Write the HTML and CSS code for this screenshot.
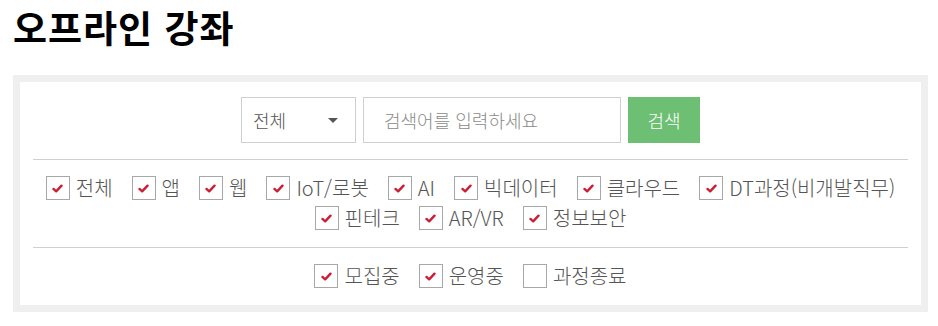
FILE: index.html
```html
<!DOCTYPE html>
<html lang="ko">
<head>
<meta charset="utf-8">
<link rel="stylesheet" href="styles.css">
</head>
<body>
<h1 class="title">오프라인 강좌</h1>
<div class="panel">
  <div class="panel-inner">
    <div class="search-row">
      <div class="select"><span>전체</span><span class="caret"></span></div>
      <div class="input">검색어를 입력하세요</div>
      <button class="btn">검색</button>
    </div>
    <div class="filters">
      <label class="chk"><span class="box on"><svg viewBox="0 0 12 10"><path d="M1.5 5.5 L4.5 8.2 L10.5 1.8"/></svg></span>전체</label>
      <label class="chk"><span class="box on"><svg viewBox="0 0 12 10"><path d="M1.5 5.5 L4.5 8.2 L10.5 1.8"/></svg></span>앱</label>
      <label class="chk"><span class="box on"><svg viewBox="0 0 12 10"><path d="M1.5 5.5 L4.5 8.2 L10.5 1.8"/></svg></span>웹</label>
      <label class="chk"><span class="box on"><svg viewBox="0 0 12 10"><path d="M1.5 5.5 L4.5 8.2 L10.5 1.8"/></svg></span>IoT/로봇</label>
      <label class="chk"><span class="box on"><svg viewBox="0 0 12 10"><path d="M1.5 5.5 L4.5 8.2 L10.5 1.8"/></svg></span>AI</label>
      <label class="chk"><span class="box on"><svg viewBox="0 0 12 10"><path d="M1.5 5.5 L4.5 8.2 L10.5 1.8"/></svg></span>빅데이터</label>
      <label class="chk"><span class="box on"><svg viewBox="0 0 12 10"><path d="M1.5 5.5 L4.5 8.2 L10.5 1.8"/></svg></span>클라우드</label>
      <label class="chk"><span class="box on"><svg viewBox="0 0 12 10"><path d="M1.5 5.5 L4.5 8.2 L10.5 1.8"/></svg></span>DT과정(비개발직무)</label>
      <label class="chk"><span class="box on"><svg viewBox="0 0 12 10"><path d="M1.5 5.5 L4.5 8.2 L10.5 1.8"/></svg></span>핀테크</label>
      <label class="chk"><span class="box on"><svg viewBox="0 0 12 10"><path d="M1.5 5.5 L4.5 8.2 L10.5 1.8"/></svg></span>AR/VR</label>
      <label class="chk"><span class="box on"><svg viewBox="0 0 12 10"><path d="M1.5 5.5 L4.5 8.2 L10.5 1.8"/></svg></span>정보보안</label>
    </div>
    <div class="filters status">
      <label class="chk"><span class="box on"><svg viewBox="0 0 12 10"><path d="M1.5 5.5 L4.5 8.2 L10.5 1.8"/></svg></span>모집중</label>
      <label class="chk"><span class="box on"><svg viewBox="0 0 12 10"><path d="M1.5 5.5 L4.5 8.2 L10.5 1.8"/></svg></span>운영중</label>
      <label class="chk"><span class="box"></span>과정종료</label>
    </div>
  </div>
</div>
</body>
</html>
```
FILE: styles.css
```css
* { box-sizing: border-box; }
body {
  margin: 0;
  padding: 0 10px 0 13px;
  background: #fff;
  font-family: "Noto Sans CJK KR", "Noto Sans", sans-serif;
}
.title {
  margin: 0;
  padding: 0;
  height: 75px;
  font-size: 37px;
  font-weight: 700;
  line-height: 54px;
  color: #000;
  letter-spacing: 1px;
}
.panel {
  border: 7px solid #efefef;
  width: 915px;
}
.panel-inner {
  padding: 15px 13px 17px;
}
.search-row {
  display: flex;
  justify-content: center;
  gap: 7px;
  height: 46px;
}
.select {
  width: 115px;
  border: 1px solid #cfcfcf;
  display: flex;
  align-items: center;
  justify-content: space-between;
  padding: 0 17px 0 11px;
  font-size: 18px;
  color: #555;
  font-weight: 300;
}
.caret {
  width: 0; height: 0;
  border-left: 5px solid transparent;
  border-right: 5px solid transparent;
  border-top: 5px solid #555;
}
.input {
  width: 258px;
  border: 1px solid #cfcfcf;
  display: flex;
  align-items: center;
  padding-left: 20px;
  font-size: 18px;
  color: #8a8a8a;
  font-weight: 300;
}
.btn {
  width: 72px;
  border: 0;
  background: #6dc073;
  color: #fff;
  font-family: inherit;
  font-size: 18px;
  font-weight: 300;
  padding: 0;
}
.filters {
  border-top: 1px solid #d0d0d0;
  margin-top: 16px;
  padding-top: 16px;
  display: flex;
  flex-wrap: wrap;
  justify-content: center;
  column-gap: 19px;
  row-gap: 6px;
}
.filters.status {
  margin-top: 17px;
  padding-top: 16px;
}
.chk {
  display: flex;
  align-items: center;
  gap: 6px;
  font-size: 20px;
  font-weight: 300;
  color: #555;
  line-height: 24px;
  height: 24px;
  white-space: nowrap;
}
.box {
  flex: 0 0 24px;
  width: 24px;
  height: 24px;
  border: 1px solid #a8a8a8;
  display: flex;
  align-items: center;
  justify-content: center;
  background: #fff;
}
.box svg {
  width: 11px;
  height: 9px;
  margin-top: 1px;
}
.box svg path {
  fill: none;
  stroke: #cc1d33;
  stroke-width: 2.6;
  stroke-linecap: round;
  stroke-linejoin: round;
}
```
